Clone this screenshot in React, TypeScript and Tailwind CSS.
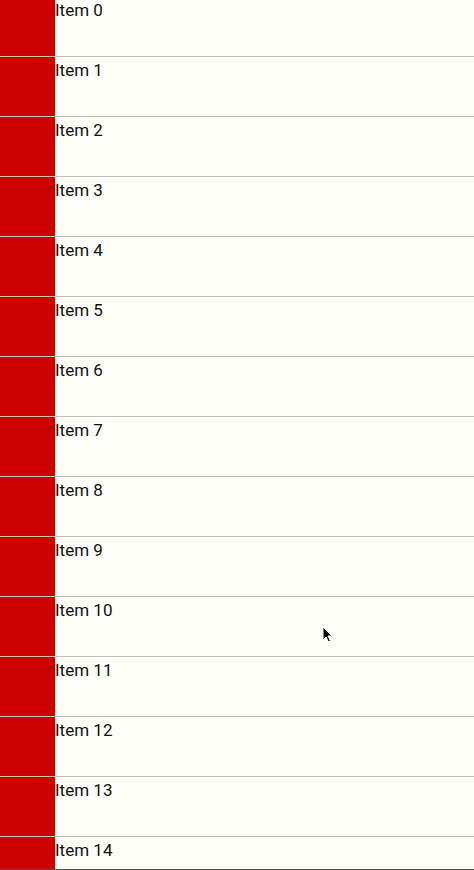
const items = Array.from({ length: 15 }, (_, i) => `Item ${i}`);

function Row({ label }: { label: string }) {
  return (
    <div className="flex h-[60px] shrink-0 border-b border-[#c4c4bc]">
      <div className="w-[55px] shrink-0 bg-[#cc0000]" />
      <div className="flex-1 pt-[3px] text-[17px] leading-[20px] text-[#111]">{label}</div>
    </div>
  );
}

export default function App() {
  return (
    <div
      className="relative h-[870px] w-[474px] overflow-hidden bg-[#fefef8] border-b border-[#555]"
      style={{ fontFamily: 'Roboto, "Liberation Sans", sans-serif' }}
    >
      {/* list is scrolled a few pixels down */}
      <div className="mt-[-3px] flex flex-col">
        {items.map((label) => (
          <Row key={label} label={label} />
        ))}
      </div>
      {/* mouse pointer caught in the capture */}
      <svg className="absolute left-[322px] top-[626px]" width="12" height="18" viewBox="0 0 12 18">
        <path d="M1 1 L1 14 L4 11 L6.5 16 L8.5 15 L6 10 L10 10 Z" fill="#000" stroke="#fff" strokeWidth="1" />
      </svg>
    </div>
  );
}
